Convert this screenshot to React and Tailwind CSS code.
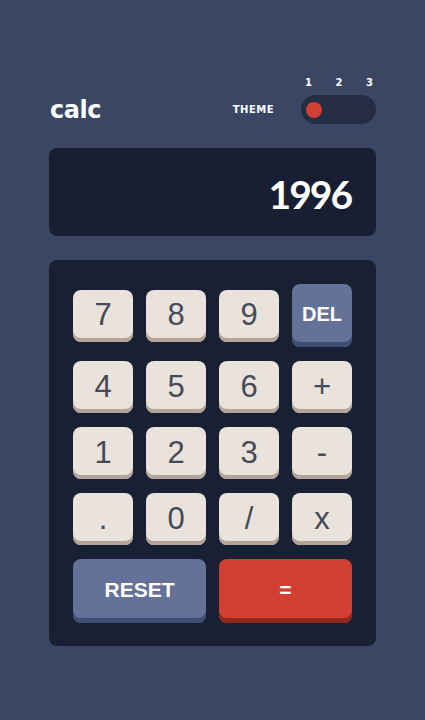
import React from 'react';

// Calculator keys, in grid order
const KEYS = ['7', '8', '9', 'DEL', '4', '5', '6', '+', '1', '2', '3', '-', '.', '0', '/', 'x'];

const Key = ({ label }) => {
  if (label === 'DEL') {
    return (
      <button className="h-[63px] rounded-lg bg-[#647198] shadow-[inset_0_-5px_0_#414e73] pb-[4px] text-[20px] font-bold text-white font-['Liberation_Sans',sans-serif]">
        DEL
      </button>
    );
  }
  return (
    <button className="h-[52px] rounded-lg bg-[#eae3dc] shadow-[inset_0_-4px_0_#b3a497] pb-[2px] text-[31px] leading-none text-[#434a59] font-['Liberation_Sans',sans-serif]">
      {label}
    </button>
  );
};

const App = () => {
  return (
    <div className="min-h-screen bg-[#3b4664] flex justify-center">
      <div className="w-[327px] pt-[78px] pb-[74px]">
        {/* Header */}
        <header className="flex items-end justify-between">
          <h1 className="pl-[1px] pb-[2px] text-[24px] leading-none font-bold text-white tracking-[-0.5px] font-['DejaVu_Sans',sans-serif]">
            calc
          </h1>
          <div className="flex items-end gap-[27px]">
            <span className="mb-[9px] text-[10px] leading-none font-bold tracking-[0.5px] text-white font-['DejaVu_Sans',sans-serif]">
              THEME
            </span>
            <div className="w-[75px]">
              <div className="flex justify-between px-[4px] text-[10px] leading-none font-bold text-white font-['DejaVu_Sans',sans-serif]">
                <span className="w-[6px] text-center">1</span>
                <span className="w-[6px] text-center">2</span>
                <span className="w-[6px] text-center">3</span>
              </div>
              <div className="mt-[7px] h-[29px] rounded-full bg-[#242d44] flex items-center px-[5px]">
                <span className="w-[16px] h-[16px] rounded-full bg-[#d03f2f]" />
              </div>
            </div>
          </div>
        </header>

        {/* Display */}
        <div className="mt-[24px] h-[88px] rounded-lg bg-[#181f33] flex items-center justify-end pr-[25px] pt-[4px]">
          <span className="text-[39px] leading-none font-bold text-white tracking-[-2px] font-['Lato',sans-serif]">
            1996
          </span>
        </div>

        {/* Keypad */}
        <div className="mt-[24px] rounded-lg bg-[#182034] p-[24px] pb-[23px]">
          <div className="grid grid-cols-4 gap-x-[13px] gap-y-[14px] items-center">
            {KEYS.map((k) => (
              <Key key={k} label={k} />
            ))}
            <button className="col-span-2 h-[64px] rounded-lg bg-[#647198] shadow-[inset_0_-5px_0_#414e73] pb-[3px] text-[21px] font-bold text-white font-['Liberation_Sans',sans-serif]">
              RESET
            </button>
            <button className="col-span-2 h-[64px] rounded-lg bg-[#d03f2f] shadow-[inset_0_-5px_0_#93261a] pb-[3px] text-[21px] font-bold text-white font-['Liberation_Sans',sans-serif]">
              =
            </button>
          </div>
        </div>
      </div>
    </div>
  );
};

export default App;
